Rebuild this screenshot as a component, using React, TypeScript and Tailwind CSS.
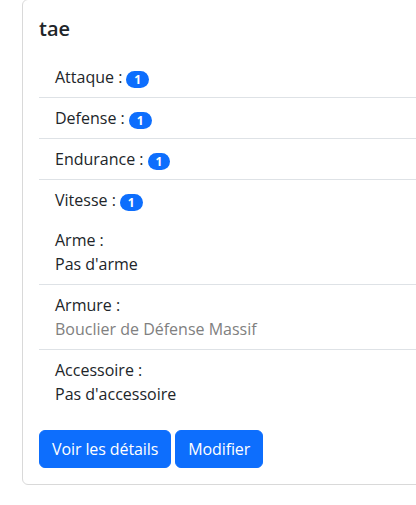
import type { ReactNode } from 'react'

// ─── Stat row ────────────────────────────────────────────────────────────────

function Badge({ children }: { children: ReactNode }) {
  return (
    <span className="ml-1 inline-block rounded-full bg-[#0d6efd] px-[8px] py-[2px] align-[-1px] text-[12px] leading-[13px] font-bold text-white">
      {children}
    </span>
  )
}

function Item({ children, border = true }: { children: ReactNode; border?: boolean }) {
  return (
    <li className={border ? 'border-b border-[#dee2e6] px-4 py-2' : 'px-4 py-2'}>{children}</li>
  )
}

const stats = [
  { label: 'Attaque', value: 1 },
  { label: 'Defense', value: 1 },
  { label: 'Endurance', value: 1 },
  { label: 'Vitesse', value: 1 },
]

export default function App() {
  return (
    <div
      className="h-[505px] w-[416px] overflow-hidden bg-white text-[16px] leading-6 text-[#212529]"
      style={{ fontFamily: '"Open Sans", sans-serif' }}
    >
      <div className="mt-[-1px] ml-[22px] w-[440px] rounded-md border border-[#d9d9d9]">
        <div className="px-4 pt-[17px] pb-4">
          <h5 className="mb-4 text-[20px] leading-6 font-semibold">tae</h5>
          <ul>
            {stats.map((s, i) => (
              <Item key={s.label} border={i < stats.length - 1}>
                {s.label} :<Badge>{s.value}</Badge>
              </Item>
            ))}
            <Item>
              <div>Arme :</div>
              <div>Pas d'arme</div>
            </Item>
            <Item>
              <div>Armure :</div>
              <div className="text-[#808080]">Bouclier de Défense Massif</div>
            </Item>
            <Item border={false}>
              <div>Accessoire :</div>
              <div>Pas d'accessoire</div>
            </Item>
          </ul>
          <div className="mt-4 flex gap-1">
            <button className="h-[38px] rounded-md border border-[#0d6efd] bg-[#0d6efd] px-3 tracking-[-0.1px] text-white">
              Voir les détails
            </button>
            <button className="h-[38px] rounded-md border border-[#0d6efd] bg-[#0d6efd] px-3 tracking-[-0.1px] text-white">
              Modifier
            </button>
          </div>
        </div>
      </div>
    </div>
  )
}
